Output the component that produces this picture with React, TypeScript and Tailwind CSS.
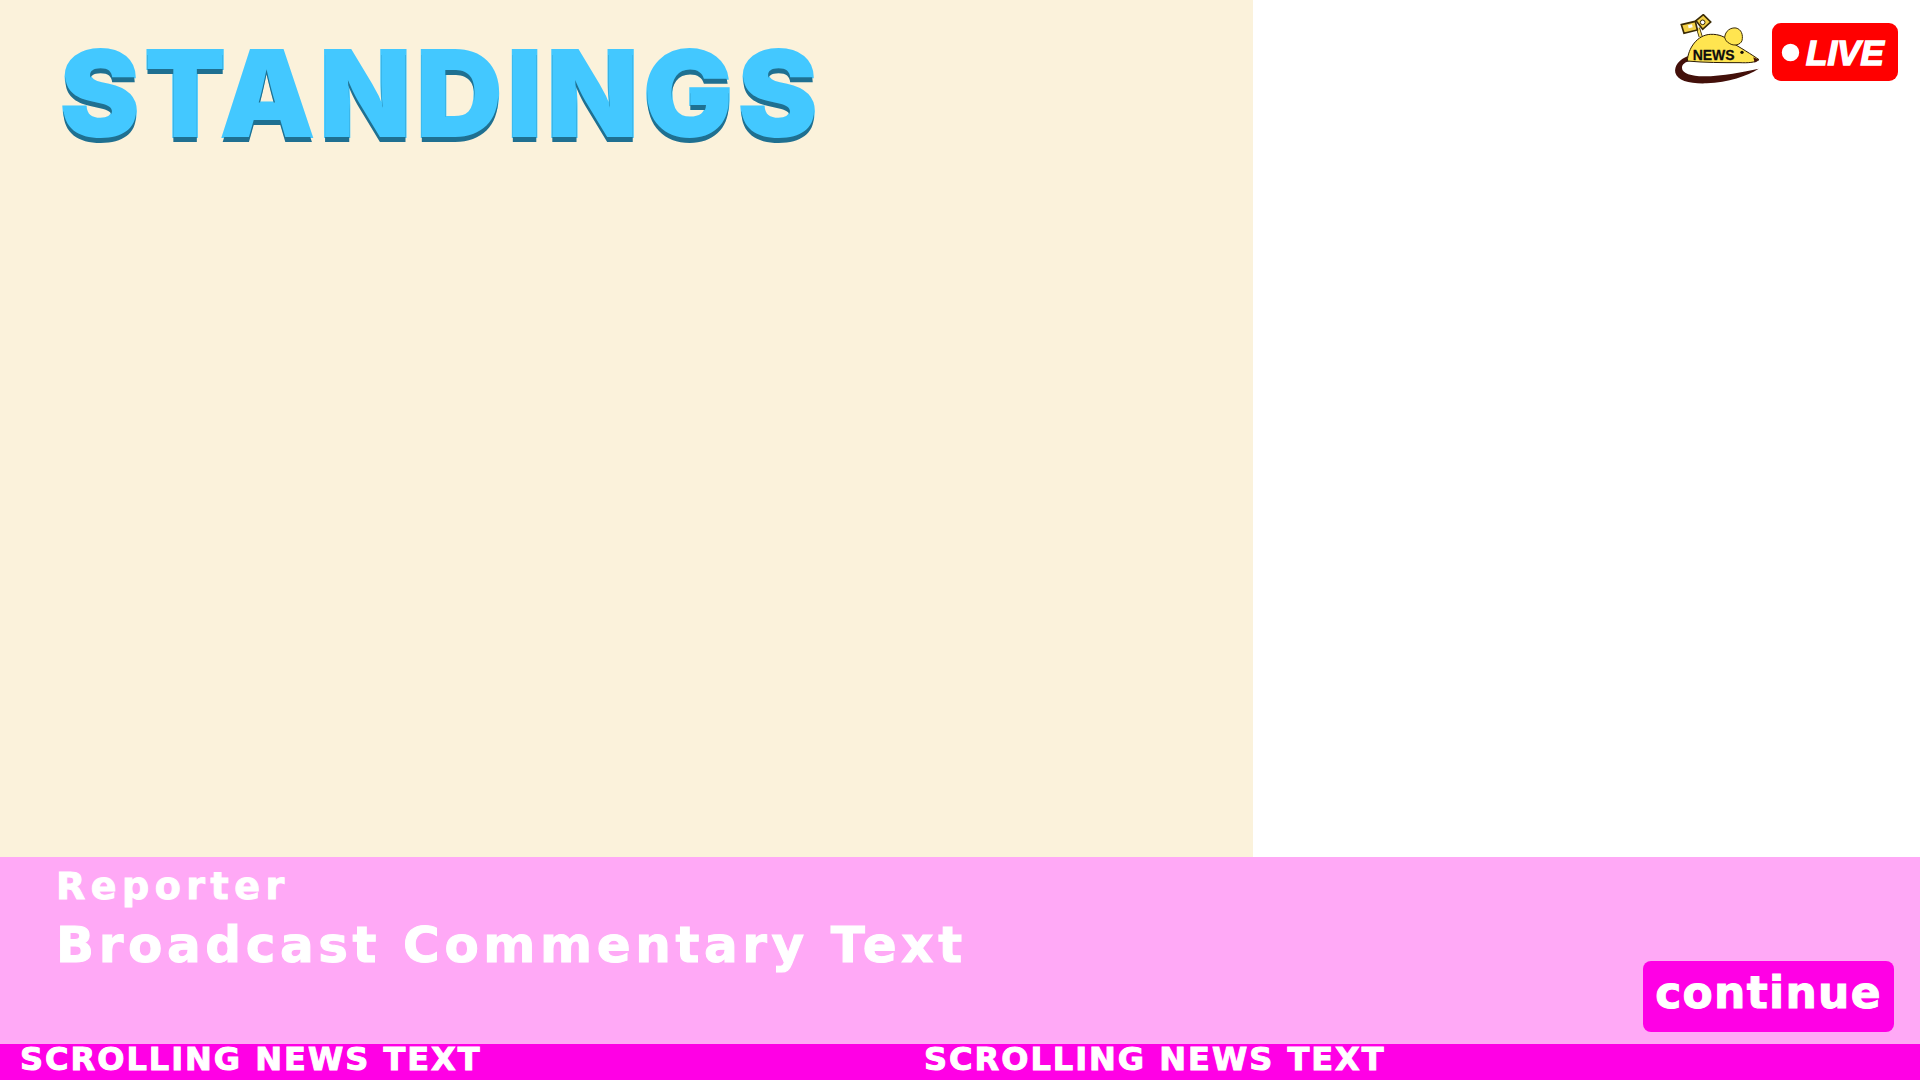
import { Circle } from "lucide-react";

function NewsMouse() {
  return (
    <svg viewBox="42 42 258 210" className="w-[86px] h-[70px] shrink-0">
      {/* tail */}
      <path
        d="M84 168 C58 178 42 198 46 218 C52 242 92 252 140 250 C205 247 262 228 296 206 C250 216 190 228 130 229 C95 229 66 220 66 204 C66 192 76 186 90 183 Z"
        fill="#43100a"
      />
      {/* wind-up key */}
      <path d="M122 110 L114 84" stroke="#3a2a05" strokeWidth="12" />
      <path d="M122 110 L114 84" stroke="#fde35f" strokeWidth="7" />
      <path d="M64 74 L106 64 L112 90 L72 100 Z" fill="#f2cf45" stroke="#3a2a05" strokeWidth="5" />
      <path d="M84 76 L96 73 L98 82 L86 85 Z" fill="#fff" />
      <path d="M108 62 L130 44 L152 66 L128 88 Z" fill="#f2cf45" stroke="#3a2a05" strokeWidth="5" />
      <circle cx="128" cy="67" r="7" fill="#fff" stroke="#3a2a05" strokeWidth="3" />
      {/* body */}
      <path
        d="M82 183 C84 145 112 104 152 103 C176 102 196 110 212 126 C240 142 276 164 297 179 C286 188 262 189 240 188 C190 188 130 188 82 183 Z"
        fill="#ffe550"
        stroke="#2a1a05"
        strokeWidth="3"
      />
      <path
        d="M194 112 C196 92 212 82 228 84 C244 88 250 104 246 122 C242 134 222 140 208 130 C200 126 196 120 194 112 Z"
        fill="#ffe550"
        stroke="#3a2a05"
        strokeWidth="3"
      />
      <circle cx="246" cy="157" r="5" fill="#1a1005" />
      <path d="M280 172 L297 179 L284 188 Z" fill="#43100a" />
      <text
        x="98"
        y="180"
        fill="#0d0d0d"
        className="font-['Liberation_Sans',sans-serif] font-bold"
        fontSize="45"
        textLength="126"
        lengthAdjust="spacingAndGlyphs"
        stroke="#0d0d0d"
        strokeWidth="0.8"
      >
        NEWS
      </text>
    </svg>
  );
}

function LiveBadge() {
  return (
    <div className="w-[126px] h-[58px] bg-[#ff0000] rounded-[9px] flex items-center pl-[9px] gap-[6px] shrink-0">
      <Circle size={19} className="fill-white text-white shrink-0" />
      <span className="font-['Liberation_Sans',sans-serif] font-bold italic text-[35px] leading-none text-white tracking-[0px] [-webkit-text-stroke:1.5px_#ffffff]">
        LIVE
      </span>
    </div>
  );
}

export default function App() {
  const blocky =
    "font-['DejaVu_Sans',sans-serif] font-bold text-white whitespace-nowrap [-webkit-text-stroke:1px_#ffffff]";

  return (
    <div className="w-[1920px] h-[1080px] overflow-hidden flex flex-col bg-white">
      <div className="h-[857px] flex shrink-0">
        <div className="w-[1253px] bg-[#fbf2db] pl-[60px] pt-[29px]">
          <h1 className="font-['Inter',sans-serif] font-black text-[119px] leading-[130px] tracking-[5px] text-[#43c8ff] [text-shadow:0_5px_0_#1f7091] [-webkit-text-stroke:2px_#43c8ff] [paint-order:stroke_fill] whitespace-nowrap">
            STANDINGS
          </h1>
        </div>
        <div className="flex-1 flex justify-end items-start gap-3 pt-[14px] pr-[22px]">
          <NewsMouse />
          <div className="pt-[9px]">
            <LiveBadge />
          </div>
        </div>
      </div>

      <div className="flex-1 bg-[#ffa9f6] flex justify-between pl-[56px] pr-[26px]">
        <div className="pt-[6px]">
          <div className={`${blocky} text-[38px] leading-[46px] tracking-[5.5px]`}>Reporter</div>
          <div className={`${blocky} text-[50px] leading-[60px] tracking-[4.6px] mt-[6px]`}>
            Broadcast Commentary Text
          </div>
        </div>
        <button
          type="button"
          className={`${blocky} self-end mb-[12px] w-[251px] h-[71px] bg-[#ff00e5] rounded-[8px] text-[44px] tracking-[1.3px] leading-none pb-2`}
        >
          continue
        </button>
      </div>

      <div className="h-[36px] bg-[#ff00e5] flex items-start pl-[20px] shrink-0">
        <div className={`${blocky} w-[904px] text-[32px] leading-[30px] tracking-[2px]`}>SCROLLING NEWS TEXT</div>
        <div className={`${blocky} w-[904px] text-[32px] leading-[30px] tracking-[2px]`}>SCROLLING NEWS TEXT</div>
      </div>
    </div>
  );
}
